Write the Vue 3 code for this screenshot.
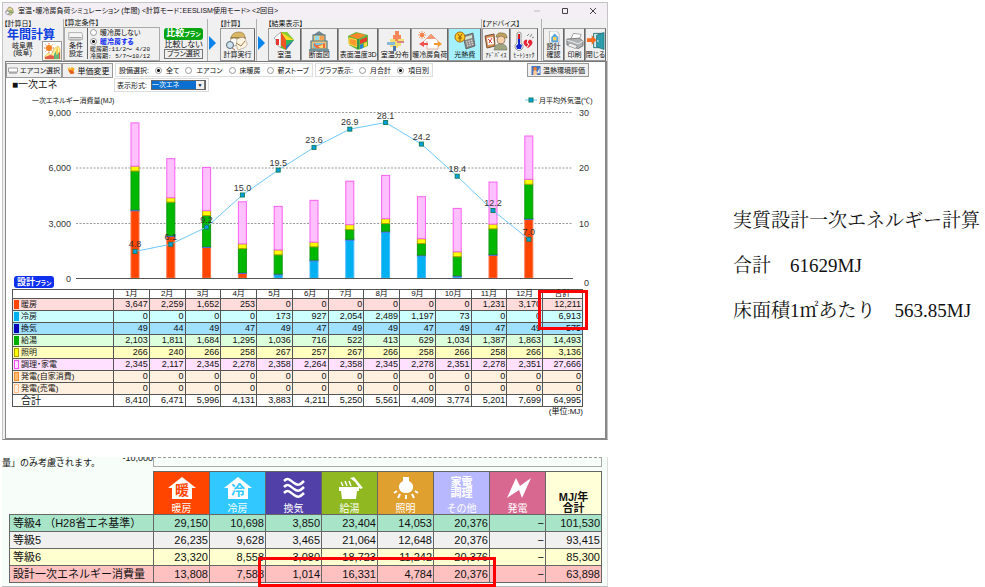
<script setup>
import { ref } from 'vue'

const heating = ref('on')
const equipment = ref('全て')
const graphMode = ref('項目別')
const displayFormat = ref('一次エネ')
const equipmentOptions = ['全て', 'エアコン', '床暖房', '薪ストーブ']
const graphOptions = ['月合計', '項目別']

const months = Array.from({ length: 12 }, (_, i) => `${i + 1}月`)
const rows = [
  { name: '暖房', key: 'heat', fill: '#ff4500', line: '#ff7040', v: [3647, 2259, 1652, 253, 0, 0, 0, 0, 0, 0, 1231, 3170], total: 12211 },
  { name: '冷房', key: 'cool', fill: '#00b0f0', line: '#40b8f8', v: [0, 0, 0, 0, 173, 927, 2054, 2489, 1197, 73, 0, 0], total: 6913 },
  { name: '換気', key: 'vent', fill: '#0000c0', line: '#5068e8', v: [49, 44, 49, 47, 49, 47, 49, 49, 47, 49, 47, 49], total: 575 },
  { name: '給湯', key: 'water', fill: '#00b800', line: '#109810', v: [2103, 1811, 1684, 1295, 1036, 716, 522, 413, 629, 1034, 1387, 1863], total: 14493 },
  { name: '照明', key: 'light', fill: '#ffff00', line: '#b0a000', v: [266, 240, 266, 258, 267, 257, 267, 266, 258, 266, 258, 266], total: 3136 },
  { name: '調理・家電', key: 'cook', fill: '#ffc0ff', line: '#f860f0', v: [2345, 2117, 2345, 2278, 2358, 2264, 2358, 2345, 2278, 2351, 2278, 2351], total: 27666 },
  { name: '発電(自家消費)', key: 'self', v: Array(12).fill(0), total: 0 },
  { name: '発電(売電)', key: 'sell', v: Array(12).fill(0), total: 0 },
  { name: '合計', key: 'sum', v: [8410, 6471, 5996, 4131, 3883, 4211, 5250, 5561, 4409, 3774, 5201, 7699], total: 64995 }
]
const temps = [4.8, 6.1, 9.2, 15.0, 19.5, 23.6, 26.9, 28.1, 24.2, 18.4, 12.2, 7.0]

const baseY = 278
const plotHeight = 166
const monthX = (i) => 135 + i * 35.8
const tempY = (t) => baseY - (t / 30) * plotHeight
const bars = months.map((m, i) => {
  let top = baseY
  const parts = []
  for (const r of rows.slice(0, 6)) {
    const h = (r.v[i] / 9000) * plotHeight
    if (!h) continue
    top -= h
    parts.push({ key: r.key, fill: r.fill, line: r.line, y: top, h })
  }
  return { x: monthX(i) - 4, parts }
})
const tempLine = temps.map((t, i) => `${monthX(i)},${tempY(t)}`).join(' ')
const fmt = (n) => n.toLocaleString('en-US')

const grades = [
  { name: '等級4 （H28省エネ基準）', key: 'g4', v: ['29,150', '10,698', '3,850', '23,404', '14,053', '20,376', '−', '101,530'] },
  { name: '等級5', key: 'g5', v: ['26,235', '9,628', '3,465', '21,064', '12,648', '20,376', '−', '93,415'] },
  { name: '等級6', key: 'g6', v: ['23,320', '8,558', '3,080', '18,723', '11,242', '20,376', '−', '85,300'] },
  { name: '設計一次エネルギー消費量', key: 'gd', v: ['13,808', '7,588', '1,014', '16,331', '4,784', '20,376', '−', '63,898'] }
]
</script>

<template>
  <main class="page">
    <div class="captures">
      <section class="window">
        <header class="titlebar">
          <svg class="app-icon" viewBox="0 0 12 12"><path d="M1 7 5 1l4 2 1 4-3 4-4-1z" fill="#e8d89a" stroke="#77724a" stroke-width=".7" /><path d="M4 6h5M5 8h5" stroke="#4b8a54" /><circle cx="3" cy="8" r="2" fill="#fff" stroke="#558" stroke-width=".6" /></svg>
          <h1>室温・暖冷房負荷シミュレーション (年間) &lt;計算モード：EESLISM使用モード&gt; &lt;2回目&gt;</h1>
          <div class="win-controls">
            <button aria-label="最小化"><svg viewBox="0 0 8 8"><path d="M1 4h6" stroke="#bbb" /></svg></button>
            <button aria-label="最大化"><svg viewBox="0 0 8 8"><path d="M1.500 1.500h5v5h-5z" fill="none" stroke="#444" /></svg></button>
            <button aria-label="閉じる"><svg viewBox="0 0 8 8"><path d="m1 1 6 6M7 1 1 7" stroke="#444" /></svg></button>
          </div>
        </header>

        <div class="toolbar">
          <div class="group g-day">
            <span class="cap">【計算日】</span>
            <strong class="period">年間計算</strong>
            <div class="place-row">
              <span class="place">岐阜県<br>(岐阜)</span>
              <button class="weather" aria-label="気象データ">
                <svg viewBox="0 0 18 18"><path d="M2 17v-3l3-3 3 2 3-6 4-3 2 3v10z" fill="#fff3a0" stroke="#d9a430" stroke-width=".6" /><path d="M2 17v-2l5-2 5 1 5-4v7z" fill="#e25d45" /><path d="M11 17v-5l2-3 3 2v6z" fill="#68b77a" /><path d="M13 13V7l2-2v7z" fill="#f4d052" /><circle cx="6" cy="6" r="3" fill="#f58220" /><path d="M6 1v1.500M6 9.500V11M1 6h1.500M9.500 6H11M2.500 2.500l1 1M8.500 8.500l1 1M2.500 9.500l1-1M8.500 3.500l1-1" stroke="#f36c21" /></svg>
              </button>
            </div>
          </div>

          <div class="group g-cond">
            <span class="cap">【算定条件】</span>
            <div class="cond-row">
              <button class="tool">
                <svg viewBox="0 0 20 14"><path d="M2 3h15l1 2v6H2z" fill="#f5f5f5" stroke="#888" stroke-width=".7" /><path d="M3 9h14" stroke="#777" /><path d="M3 12h13" stroke="#aaa" /></svg>
                <span>条件<br>設定</span>
              </button>
              <div class="cond-radios">
                <label><input v-model="heating" type="radio" name="heating" value="off">暖冷房しない</label>
                <label class="chosen"><input v-model="heating" type="radio" name="heating" value="on">暖冷房する</label>
                <span class="dates">暖房期:11/2〜 4/20<br>冷房期: 5/7〜10/12</span>
              </div>
            </div>
          </div>

          <div class="group g-comp">
            <span class="badge green">比較<small>プラン</small></span>
            <span class="comp-text">比較しない</span>
            <button class="plain">プラン選択</button>
          </div>

          <svg class="arrow" viewBox="0 0 7 14"><path d="M0 0 7 7 0 14z" fill="#0a84ea" /></svg>

          <div class="group g-calc">
            <span class="cap">【計算】</span>
            <button class="tool">
              <svg viewBox="0 0 24 20"><path d="M5 7q1-6 8-6 6 0 6 6z" fill="#d9b765" stroke="#8a6d31" stroke-width=".6" /><path d="M4 7h16" stroke="#7b602d" /><circle cx="8" cy="11" r="4" fill="#fff" stroke="#a78b60" stroke-width=".7" /><path d="M11 8q8-4 9 2 3 4-2 7l-6 2q-3-5-1-11" fill="#fff4df" stroke="#aaa08e" stroke-width=".7" /><circle cx="4" cy="14" r="3.500" fill="#cfe4ee" stroke="#567" /><path d="m6 17 3 2M10 12l5 3 4-5" stroke="#a17a4d" fill="none" /></svg>
              <span>計算実行</span>
            </button>
          </div>

          <svg class="arrow" viewBox="0 0 7 14"><path d="M0 0 7 7 0 14z" fill="#0a84ea" /></svg>

          <div class="group g-results">
            <span class="cap">【結果表示】</span>
            <div class="btn-row">
              <button class="tool w1">
                <svg viewBox="0 0 22 20"><path d="m1 7 7-6v16l-5-4V9z" fill="#fff" stroke="#777" stroke-width=".6" /><path d="M8 1h6l7 8-8 10-5-2z" fill="#66bb32" /><path d="m8 1 13 8h-8z" fill="#ffdd25" /><path d="M8 1h6l7 8z" fill="#8fca35" /><path d="m8 1 5 8v10l-5-5z" fill="#f05426" /><path d="m13 9 8 0-8 6z" fill="#31b65a" /><path d="m13 15 8-6-8 10z" fill="#3b73c8" /><path d="M3 8h3v6H3z" fill="#e9342f" /></svg>
                <span>室温</span>
              </button>
              <button class="tool w2">
                <svg viewBox="0 0 20 20"><path d="M4 4 10 0l6 4z" fill="#708993" /><path d="M4 4h12v6H4zM2 10h16v8H2z" fill="#efc77c" stroke="#557985" stroke-width="1.200" /><path d="M6 5h4v4H6z" fill="#91daed" /><path d="M11 5h4v4h-4z" fill="#f6a052" /><path d="M4 12h12v5H4z" fill="#75c7e0" /><path d="M5 11q1 4 5 3t6-2v5H8q-4-1-3-6" fill="#f26639" /><path d="M9 15q3 0 5-2v4h-3z" fill="#ffd76d" /><path d="M0 19h20" stroke="#71939d" stroke-width="2" /></svg>
                <span>断面図</span>
              </button>
              <button class="tool w3">
                <svg viewBox="0 0 24 20"><path d="m2 5 8-4 12 3v11l-10 4-9-5z" fill="#65b447" /><path d="m3 5 8-3 9 2-8 4z" fill="#ff8728" /><path d="m3 7 8 2v7l-8-3z" fill="#ff9a30" stroke="#ffdc39" /><path d="m14 9 7-3v4l-7 3z" fill="#ea3b29" /><path d="m14 14 3-1v4l-3 1z" fill="#2b84db" /><path d="m18 12 3-1v4l-3 1z" fill="#ffd33a" /><path d="M12 8v10" stroke="#1e8955" stroke-width="1.500" /></svg>
                <span>表面温度3D</span>
              </button>
              <button class="tool w1">
                <svg viewBox="0 0 20 20"><path d="M10 0h4v4h2v4h3v4h-3v3h-3v2h-3v3H8v-4H5v-2H2v-3h3V8h3V4h2z" fill="#f1df74" /><path d="M10 0h4v4h2v4h-3v2h-3V8H8V4h2z" fill="#f3875b" /><path d="M2 11h8v3H2z" fill="#88b9dc" /><path d="M12 10h7v2h-7z" fill="#d7848f" /><path d="M8 15h3v5H8z" fill="#4b73ad" /></svg>
                <span>室温分布</span>
              </button>
              <button class="tool w2">
                <svg viewBox="0 0 24 20"><path d="m6 10 7-7 7 7v8H9v-8" fill="#fff" stroke="#d4a18d" stroke-width=".8" /><circle cx="4" cy="4" r="2" fill="#f76c26" /><path d="M4 0v8M0 4h8M1 1l6 6M1 7l6-6" stroke="#f3864f" stroke-width=".8" /><path d="M10 12H6v-2l-5 3 5 3v-2h4z" fill="#ef514a" /><path d="M16 12h4v-2l4 3-4 3v-2h-4z" fill="#f59a31" /><path d="m13 3-5 5h10z" fill="#f79a79" /></svg>
                <span>暖冷房負荷</span>
              </button>
              <button class="tool w1 active">
                <svg viewBox="0 0 22 20"><path d="m9 5 10-3 2 13-9 3z" fill="#848484" stroke="#555" stroke-width=".7" /><path d="m11 6 7-2v3l-7 2z" fill="#d4e6d6" /><path d="m12 11 7-2M12.500 13l7-2M13 15l7-2" stroke="#ddd" stroke-dasharray="1.500 1" stroke-width="1.300" /><circle cx="6" cy="6" r="5" fill="#ffca28" stroke="#a76d12" /><path d="m4 3 2 3 2-3M6 6v4M4 7h4" stroke="#8d560c" fill="none" /></svg>
                <span>光熱費</span>
              </button>
            </div>
          </div>

          <div class="group g-advice">
            <span class="cap">【アドバイス】</span>
            <div class="btn-row">
              <button class="tool">
                <svg viewBox="0 0 24 20"><path d="m1 5 9-2 1 12-8 2z" fill="#d9925b" stroke="#754d32" /><path d="m3 7 6-1 1 7-6 1z" fill="#fff" /><path d="m4 8 4 4M8 7l-3 5" stroke="#d43d3b" /><path d="M12 6q1-5 6-4 5 0 5 5z" fill="#bda45c" stroke="#74633c" stroke-width=".6" /><circle cx="17" cy="9" r="4" fill="#f8d1ab" stroke="#705441" stroke-width=".6" /><path d="M10 19q1-7 7-6 6 0 6 6z" fill="#9da680" stroke="#73745c" stroke-width=".6" /></svg>
                <span class="small">ｱﾄﾞﾊﾞｲｽ</span>
              </button>
              <button class="tool">
                <svg viewBox="0 0 22 20"><path d="M4 2q2-2 4 0v10a4 4 0 1 1-4 0z" fill="#fff" stroke="#555" stroke-width=".6" /><path d="M5 3h2v5H5z" fill="#d71620" /><path d="M5 8h2v5l2 1-1 4H4l-1-3 2-2z" fill="#1225d1" /><path d="M15 17q-6-4-4-7 2-3 4 0 2-3 4 0 2 3-4 7" fill="#e52636" /><path d="m15 9-1 3 2 1-2 3" stroke="#fff" fill="none" /><path d="m14 5 2-2M17 6l2-3M19 7l2-1" stroke="#555" stroke-width=".7" /></svg>
                <span class="small">ﾋｰﾄｼｮｯｸ</span>
              </button>
            </div>
          </div>

          <div class="group g-last">
            <div class="btn-row">
              <button class="tool">
                <svg viewBox="0 0 16 14"><path d="M3 0h8l3 3v11H3z" fill="#fff" stroke="#999" stroke-width=".7" /><path d="m5 7 4-4 4 4v6H5z" fill="#54a6e3" /><path d="M7 7h4v4H7z" fill="#ffd25a" /></svg>
                <span>設計<br>確認</span>
              </button>
              <button class="tool">
                <svg viewBox="0 0 20 18"><path d="m6 7 3-6 8 1-2 6z" fill="#fff" stroke="#777" stroke-width=".7" /><path d="m2 7 13-1 4 3v5l-5 3-12-4z" fill="#aeb1b5" stroke="#555" stroke-width=".7" /><path d="m2 8 12 4 5-3" stroke="#eee" fill="none" /><path d="m5 11 8 3-2 3-8-3z" fill="#eee" stroke="#777" stroke-width=".6" /></svg>
                <span>印刷</span>
              </button>
              <button class="tool">
                <svg viewBox="0 0 20 18"><path d="M8 1h10v15H8z" fill="#d9eff1" stroke="#26727b" /><path d="m11 3 8-3v18l-8-3z" fill="#2f9daa" stroke="#176b77" stroke-width=".7" /><circle cx="12.500" cy="9" r=".8" fill="#fff" /><path d="M1 6h5V3l5 5-5 5v-3H1z" fill="#f46a20" /></svg>
                <span>閉じる</span>
              </button>
            </div>
          </div>
        </div>

        <div class="pane">
          <div class="options">
            <div class="option-buttons">
              <button class="opt-btn ac"><svg viewBox="0 0 10 6"><path d="M.5.5h9v4h-9z" fill="#fff" stroke="#888" stroke-width=".8" /><path d="M1 5.500h8" stroke="#888" /></svg>エアコン選択</button>
              <button class="opt-btn price"><svg viewBox="0 0 10 10"><path d="m1 2 3 1 2-2 3 2-2 6H4z" fill="#f5aa20" /><path d="m2 5 4-1 3 4-4 1z" fill="#e65b20" /><path d="m3 1 3 4" stroke="#ffd75d" /></svg>単価変更</button>
            </div>
            <fieldset class="radio-box">
              <legend>設備選択:</legend>
              <label v-for="o in equipmentOptions" :key="o"><input v-model="equipment" type="radio" name="equipment" :value="o">{{ o }}</label>
            </fieldset>
            <fieldset class="radio-box">
              <legend>グラフ表示:</legend>
              <label v-for="o in graphOptions" :key="o"><input v-model="graphMode" type="radio" name="graph" :value="o">{{ o }}</label>
            </fieldset>
            <button class="opt-btn env"><svg viewBox="0 0 10 10"><path d="M0 0h10v10H0z" fill="#4775b8" /><path d="M2 10V6l2-3 2 3v4z" fill="#ffc99a" /><circle cx="4" cy="3" r="2" fill="#f57c33" /><path d="m6 8 3-6v6z" fill="#eee" /></svg>温熱環境評価</button>
          </div>

          <div class="format-row">
            <h2>■一次エネ</h2>
            <div class="format-box">
              <label for="format">表示形式:</label>
              <span class="select-wrap">
                <select id="format" v-model="displayFormat"><option>一次エネ</option></select>
              </span>
            </div>
          </div>

          <svg class="chart" viewBox="6 92 599 197" role="img" aria-label="一次エネルギー消費量と月平均外気温">
            <text x="32" y="103" class="jp">一次エネルギー消費量(MJ)</text>
            <g v-for="n in 4" :key="n">
              <line v-if="n < 4" x1="76" x2="573" :y1="57 + n * 55.5" :y2="57 + n * 55.5" stroke="#999" stroke-dasharray="2 1.500" />
              <text x="71" :y="60 + n * 55.5" text-anchor="end">{{ fmt((4 - n) * 3000) }}</text>
              <text x="589" :y="n === 4 ? 286 : 60 + n * 55.5" text-anchor="end">{{ (4 - n) * 10 }}</text>
            </g>
            <g v-for="(b, i) in bars" :key="i">
              <rect v-for="p in b.parts" :key="p.key" :x="b.x" :y="p.y" width="8" :height="p.h" :fill="p.fill" :stroke="p.line" />
            </g>
            <line x1="76" x2="573" y1="278.500" y2="278.500" stroke="#555" />
            <polyline :points="tempLine" fill="none" stroke="#70c8f8" />
            <g v-for="(t, i) in temps" :key="i">
              <rect :x="monthX(i) - 2" :y="tempY(t) - 2" width="4" height="4" fill="#00a0e8" stroke="#168060" />
              <text :x="monthX(i)" :y="tempY(t) - 4" text-anchor="middle">{{ t.toFixed(1) }}</text>
            </g>
            <path d="M525 100h12" stroke="#70c8f8" />
            <rect x="529" y="98" width="4" height="4" fill="#00a0e8" stroke="#168060" />
            <text x="539" y="103" class="jp">月平均外気温(℃)</text>
            <rect x="14" y="276" width="40" height="12" rx="3" fill="#1030f0" />
            <text x="17" y="285" class="plan">設計<tspan class="plan-sub">プラン</tspan></text>
          </svg>

          <div class="table-area">
            <table class="monthly">
              <colgroup><col class="c-name"><col v-for="m in months" :key="m"><col class="c-total"></colgroup>
              <thead>
                <tr><th></th><th v-for="m in months" :key="m" scope="col">{{ m }}</th><th scope="col">合計</th></tr>
              </thead>
              <tbody>
                <tr v-for="r in rows" :key="r.key" :class="r.key">
                  <th scope="row"><div><i></i>{{ r.name }}</div></th>
                  <td v-for="(n, i) in r.v" :key="i">{{ fmt(n) }}</td>
                  <td>{{ fmt(r.total) }}</td>
                </tr>
              </tbody>
            </table>
            <div class="mark mark-total"></div>
            <p class="unit">(単位:MJ)</p>
          </div>
        </div>
      </section>

      <section class="grades">
        <div class="cut">
          <p>※H28省エネ基準<br>量」のみ考慮されます。</p>
          <span class="tick">-10,000</span>
          <div class="cut-plot"></div>
        </div>
        <table class="grade-table">
          <colgroup><col class="c-grade"><col v-for="n in 8" :key="n"></colgroup>
          <thead>
            <tr>
              <td class="blank"></td>
              <th scope="col" class="h-heat"><svg viewBox="0 0 28 22"><path d="M14 0 28 11h-4v11H4V11H0z" fill="#fff" /><text x="14" y="18" text-anchor="middle" fill="#ff4500">暖</text></svg>暖房</th>
              <th scope="col" class="h-cool"><svg viewBox="0 0 28 22"><path d="M14 0 28 11h-4v11H4V11H0z" fill="#fff" /><text x="14" y="18" text-anchor="middle" fill="#30c8ff">冷</text></svg>冷房</th>
              <th scope="col" class="h-vent"><svg viewBox="0 0 28 22"><path d="M4 4c4-4 6-1 10 2s6 2 10-2M4 10c4-4 6-1 10 2s6 2 10-2M4 16c4-4 6-1 10 2s6 2 10-2" fill="none" stroke="#fff" stroke-width="2.500" /></svg>換気</th>
              <th scope="col" class="h-water"><svg viewBox="0 0 28 22"><path d="M3 10h20v4h-2l-1 8H6l-1-8H3z" fill="#fff" /><path d="m14 1 4-1 9 11-3 1-5-7z" fill="#fff" /><path d="m5 5 2 4M9 4l2 5M13 4l2 5" stroke="#fff" stroke-width="1.500" /></svg>給湯</th>
              <th scope="col" class="h-light"><svg viewBox="0 0 28 22"><path d="M11 0h6v4q5 3 4 7-1 5-7 5t-7-5q-1-4 4-7z" fill="#fff" /><path d="m5 14-3 2M8 17l-2 4M14 18v4M20 17l2 4M23 14l3 2" stroke="#fff" stroke-width="2" /></svg>照明</th>
              <th scope="col" class="h-other"><b>家電<br>調理</b>その他</th>
              <th scope="col" class="h-power"><svg viewBox="0 0 28 22"><path d="m12 1-9 20 12-8 3 8L27 1l-11 8z" fill="#fff" /></svg>発電</th>
              <th scope="col" class="h-sum">MJ/年<br>合計</th>
            </tr>
          </thead>
          <tbody>
            <tr v-for="g in grades" :key="g.key" :class="g.key">
              <th scope="row">{{ g.name }}</th>
              <td v-for="(n, i) in g.v" :key="i">{{ n }}</td>
            </tr>
          </tbody>
        </table>
        <div class="mark mark-design"></div>
      </section>
    </div>

    <aside class="notes">
      <p>実質設計一次エネルギー計算</p>
      <p>合計　61629MJ</p>
      <p>床面積1㎡あたり　563.85MJ</p>
    </aside>
  </main>
</template>

<style>
body {
  background: #fff;
}
</style>

<style scoped>
.page {
  display: grid;
  grid-template-columns: 608fr 377fr;
  align-items: start;
  color: #111;
}
.captures {
  min-width: 0;
  padding: 2px 0 0 2px;
  font-family: "Liberation Sans", "Noto Sans CJK JP", sans-serif;
  font-size: 8px;
  font-feature-settings: "palt";
}
button, select, input {
  font: inherit;
  font-feature-settings: inherit;
  color: inherit;
  margin: 0;
  padding: 0;
}
h1, h2, p { margin: 0; font-weight: 400; }
svg { display: block; }

/* window frame */
.window {
  border: 1px solid #c4c4c4;
  border-bottom-color: #888;
  background: #f0f0f0;
}
.titlebar {
  display: flex;
  align-items: center;
  height: 16px;
  padding-left: 2px;
  background: #f4eff4;
}
.app-icon { width: 10px; height: 10px; margin-right: 3px; }
h1 { font-size: 7px; line-height: 12px; white-space: nowrap; }
.win-controls { display: flex; margin-left: auto; }
.win-controls button {
  display: grid;
  place-items: center;
  width: 28px;
  height: 14px;
  border: 0;
  background: none;
}
.win-controls svg { width: 8px; height: 8px; }

/* toolbar */
.toolbar {
  display: flex;
  align-items: stretch;
  height: 42px;
  padding-left: 1px;
  white-space: nowrap;
}
.group {
  display: flex;
  flex-direction: column;
  box-sizing: border-box;
  justify-content: flex-end;
}
.cap { height: 9px; line-height: 9px; margin-bottom: auto; font-size: 7px; }
.g-day { width: 60px; border-right: 1px solid #b0b0b0; }
.period {
  color: #0a3de0;
  font-size: 12px;
  line-height: 12px;
  padding-left: 3px;
}
.place-row { display: flex; justify-content: space-between; align-items: flex-end; padding: 0 1px 0 8px; height: 20px; }
.place { font-size: 7px; line-height: 7px; text-align: center; padding-bottom: 5px; }
.weather { width: 20px; height: 20px; border: 1px solid #999; background: #fff; }
.weather svg { width: 18px; height: 18px; }
.g-cond { width: 96px; }
.cond-row { display: flex; height: 33px; border: 1px solid #aaa; }
.cond-row .tool { width: 23px; border-width: 0 1px 0 0; flex: none; }
.cond-radios { display: flex; flex-direction: column; padding-left: 2px; }
.cond-radios label { display: flex; align-items: center; gap: 3px; height: 9px; font-size: 7px; line-height: 8px; }
.cond-radios .chosen { color: #0a28f0; font-weight: 700; }
.dates { font-family: "Liberation Mono", "Noto Sans CJK JP", monospace; font-size: 6px; line-height: 7px; white-space: pre; }
input[type="radio"] {
  appearance: none;
  box-sizing: border-box;
  flex: none;
  width: 7px;
  height: 7px;
  border: 1px solid #999;
  border-radius: 50%;
  background: #fff;
}
input[type="radio"]:checked { background: radial-gradient(circle, #111 0 1px, #fff 2px); }
.g-comp { width: 48px; padding: 9px 4px 2px; justify-content: space-between; border-right: 1px solid #b0b0b0; }
.badge { border-radius: 3px; line-height: 11px; text-align: center; color: #fff; font-size: 9px; font-weight: 700; }
.badge small { font-size: 6px; }
.green { background: #07a512; }
.comp-text { font-size: 8px; line-height: 9px; text-align: center; }
.plain { height: 11px; border: 1px solid #777; background: #f0f0f0; font-size: 7px; line-height: 8px; white-space: nowrap; }
.arrow { width: 7px; height: 14px; margin: 17px 2px 0 1px; flex: none; }
.g-calc { width: 39px; padding: 0 1px 0 2px; border-right: 1px solid #b0b0b0; }
.g-results { width: 213px; margin-left: 1px; }
.g-advice { width: 57px; border-left: 1px solid #b0b0b0; }
.g-last { width: 66px; margin-left: auto; padding: 0 1px; border-left: 1px solid #b0b0b0; }
.btn-row { display: flex; height: 33px; }
.btn-row .tool { flex: 1 1 0; min-width: 0; }
.btn-row .w1 { flex: 32 1 0; }
.btn-row .w2 { flex: 37 1 0; }
.btn-row .w3 { flex: 40 1 0; }
.tool {
  display: flex;
  flex-direction: column;
  align-items: center;
  justify-content: space-between;
  box-sizing: border-box;
  height: 33px;
  padding: 2px 0 1px;
  border: 1px solid #999;
  border-right-color: #666;
  background: #f0f0f0;
  font-size: 7px;
  line-height: 8px;
  white-space: nowrap;
}
.tool svg { flex: 1 1 0; min-height: 0; max-width: 100%; }
.cond-row .tool { height: 31px; }
.tool .small { font-size: 6px; }
.active { background: #a4f0ff; }

/* option rows */
.pane { margin-left: 2px; border: 1px solid #888; border-right-width: 2px; background: #fff; border-top: 1px solid #777; }
.options { display: flex; align-items: center; height: 16px; gap: 2px; }
.option-buttons { display: flex; }
.opt-btn {
  display: flex;
  align-items: center;
  justify-content: center;
  gap: 2px;
  box-sizing: border-box;
  height: 15px;
  border: 1px solid #999;
  background: #f0f0f0;
  white-space: nowrap;
}
.opt-btn svg { width: 10px; height: 9px; }
.ac { width: 56px; font-size: 7px; }
.price { width: 51px; }
.env { width: 62px; height: 14px; margin: 0 16px 0 auto; font-size: 7px; }
.radio-box {
  display: flex;
  align-items: center;
  box-sizing: border-box;
  gap: 6px;
  height: 14px;
  min-width: 0;
  margin: 0;
  padding: 0 3px;
  border: 1px solid #ddd;
  font-size: 7px;
  white-space: nowrap;
}
.radio-box legend { float: left; padding: 0; }
.radio-box label { display: flex; align-items: center; gap: 4px; }
.format-row { display: flex; align-items: center; height: 14px; }
h2 { width: 108px; box-sizing: border-box; padding-left: 6px; font-size: 10px; line-height: 12px; }
.format-box { display: flex; align-items: center; gap: 4px; height: 12px; padding: 0 2px; border: 1px solid #ddd; font-size: 7px; }
.select-wrap { position: relative; display: flex; }
.select-wrap::after {
  content: "▼";
  position: absolute;
  right: 1px;
  top: 1px;
  width: 8px;
  height: 8px;
  background: #f0f0f0;
  border-right: 1px solid #777;
  font-size: 5px;
  line-height: 8px;
  text-align: center;
  color: #111;
  pointer-events: none;
}
select {
  appearance: none;
  width: 55px;
  height: 10px;
  border: 1px solid #666;
  border-radius: 0;
  background: #0a6fd0;
  color: #fff;
  line-height: 8px;
}

/* chart */
.chart { width: 100%; height: auto; }
.chart text { font-size: 9px; fill: #333; }
.chart .jp { font-size: 7px; fill: #111; }
.chart .plan { font-size: 9px; font-weight: 700; fill: #fff; }
.chart .plan-sub { font-size: 6px; }

/* monthly table */
.table-area { position: relative; margin: 0 22px 0 6px; padding-bottom: 22px; }
table { border-collapse: collapse; table-layout: fixed; width: 100%; }
.monthly { font-size: 9px; line-height: 11px; background: #fff; }
.monthly th, .monthly td { padding: 0 1px 0 0; border: 1px solid #555; height: 11px; font-weight: 400; text-align: right; }
.monthly thead th { height: 8px; line-height: 8px; font-size: 8px; padding: 0; text-align: center; }
.c-name { width: 101px; }
.c-total { width: 40px; }
.monthly tbody th { font-size: 8px; text-align: left; }
.monthly tbody th div { display: flex; align-items: center; gap: 2px; height: 11px; padding-left: 1px; }
.monthly i { box-sizing: border-box; width: 5px; height: 9px; border: 1px solid transparent; }
.heat { background: #ffdcdc; }
.heat i { background: #ff4500; }
.cool { background: #ccffff; }
.cool i { background: #00b0f0; }
.vent { background: #a0e0ff; }
.vent i { background: #0000b8; }
.water { background: #dcffdc; }
.water i { background: #00b000; }
.light { background: #ffffc0; }
.light i { background: #ffff00; border-color: #b0a000; }
.cook { background: #ffe0ff; }
.cook i { background: #ffe0ff; border-color: #f050f0; }
.self, .sell { background: #fff0e0; }
.self i { background: #ffb870; border-color: #f09030; }
.sell i { border-color: #ffc090; }
.monthly .sum th { font-size: 10px; }
.unit { font-size: 8px; line-height: 9px; text-align: right; }
.mark { position: absolute; box-sizing: border-box; border: 3px solid #f00; pointer-events: none; }
.mark-total { right: -5px; top: 1px; width: 50px; height: 40px; }

/* grade comparison */
.grades {
  position: relative;
  margin-top: 17px;
  padding: 0 5px 3px 7px;
  border-right: 1px solid #ddd;
  border-bottom: 1px solid #bbb;
  background: #f7fdf9;
  font-feature-settings: normal;
}
.cut { display: flex; height: 14px; margin-left: -7px; overflow: hidden; }
.cut p { width: 120px; margin-top: -7px; font-size: 9px; line-height: 9px; white-space: nowrap; }
.tick { width: 31px; margin-top: -3px; font-size: 9px; line-height: 9px; text-align: right; }
.cut-plot { flex: 1; box-sizing: border-box; height: 10px; border: 1px solid #aaa; border-top: 1px dashed #999; }
.grade-table { font-size: 11px; line-height: 16px; }
.c-grade { width: 144px; }
.grade-table th, .grade-table td { height: 16px; padding: 0 1px 0 0; border: 1px solid #666; font-weight: 400; text-align: right; white-space: nowrap; }
.grade-table tbody th { padding-left: 3px; text-align: left; }
.grade-table thead th { height: 42px; padding: 0; color: #fff; font-size: 10px; line-height: 11px; text-align: center; vertical-align: bottom; }
.grade-table thead .blank { border-width: 0 1px 1px 0; }
.grade-table thead svg { width: 28px; height: 22px; margin: 0 auto 4px; }
.grade-table thead svg text { font-size: 14px; font-weight: 700; }
.grade-table thead b { display: block; margin-bottom: 4px; font-size: 11px; line-height: 11px; }
.h-heat { background: #ff4500; }
.h-cool { background: #30c8ff; }
.h-vent { background: #5040a8; }
.h-water { background: #90b820; }
.h-light { background: #e0a030; }
.h-other { background: #b8b8ff; }
.h-power { background: #d86890; }
.grade-table thead .h-sum { background: #ffffd8; color: #111; font-size: 11px; font-weight: 700; }
.g4 { background: #a8e4c8; }
.g5 { background: #f0f0f0; }
.g6 { background: #ffffd0; }
.gd { background: #ffc0c0; }
.mark-design { left: 256px; right: 111px; bottom: -1px; height: 30px; }

.notes {
  padding: 198px 0 0 125px;
  font-family: "Liberation Serif", "Noto Serif CJK JP", "Noto Sans CJK JP", serif;
  font-size: 19px;
  font-weight: 300;
  line-height: 45px;
  white-space: nowrap;
}
</style>
